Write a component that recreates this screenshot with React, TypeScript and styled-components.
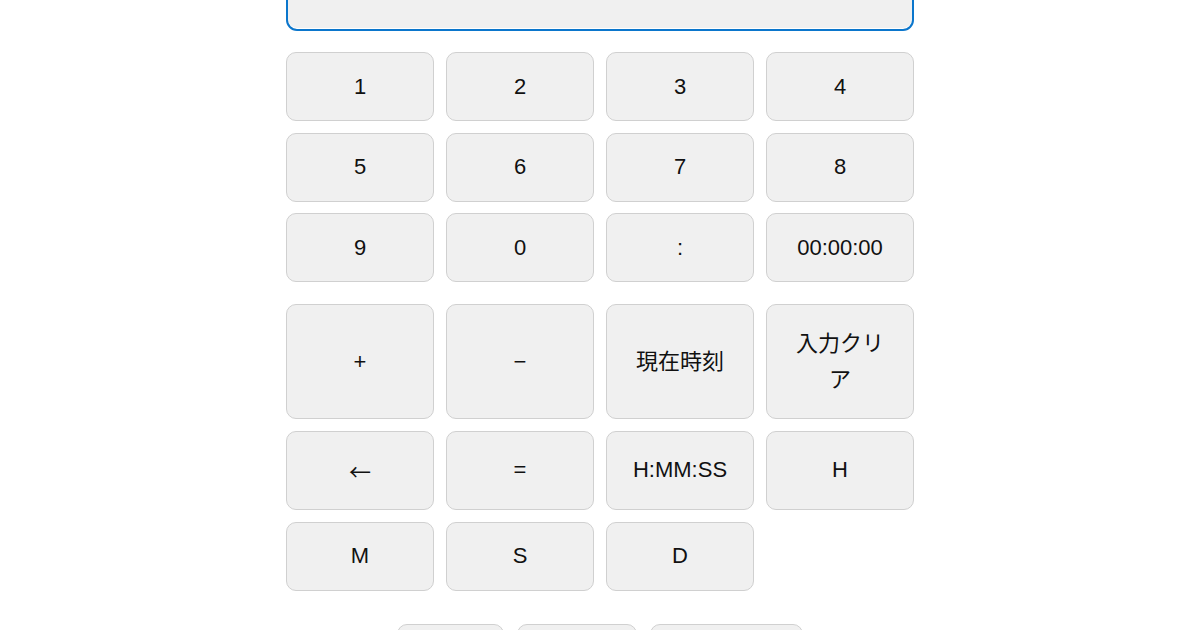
import React from "react";
import styled, { createGlobalStyle } from "styled-components";

const Global = createGlobalStyle`
  html, body { margin: 0; padding: 0; background: #ffffff; }
  body { font-family: "Liberation Sans", Arial, "Noto Sans CJK JP", sans-serif; overflow: hidden; }
`;

const Page = styled.div`
  width: 628px;
  margin: -30px auto 0;
  display: flex;
  flex-direction: column;
`;

const Display = styled.input`
  box-sizing: border-box;
  width: 628px;
  height: 61px;
  border: 2px solid #0b76cc;
  border-radius: 11px;
  background: #f0f0f0;
  box-shadow: inset 0 -1px 0 #ffffff;
  outline: none;
  font: 22px "Liberation Sans", sans-serif;
  padding: 0 16px;
`;

const Grid = styled.div<{ $rows: string; $mt: number }>`
  display: grid;
  grid-template-columns: repeat(4, 148px);
  grid-template-rows: ${(p) => p.$rows};
  column-gap: 12px;
  row-gap: 11.5px;
  margin-top: ${(p) => p.$mt}px;
`;

const Key = styled.button<{ $cjk?: boolean }>`
  box-sizing: border-box;
  border: 1px solid #d0d0d0;
  border-radius: 10px;
  background: #f0f0f0;
  color: #111;
  font-family: ${(p) =>
    p.$cjk
      ? `"Noto Sans CJK JP", sans-serif`
      : `"Liberation Sans", Arial, "Noto Sans CJK JP", sans-serif`};
  font-size: 22px;
  line-height: 36px;
  padding: 0 24px;
  cursor: pointer;
  display: flex;
  align-items: center;
  justify-content: center;
  text-align: center;
`;

const Footer = styled.div`
  display: flex;
  justify-content: center;
  gap: 13px;
  margin-top: 33px;
`;

const FootKey = styled(Key)<{ $w: number }>`
  width: ${(p) => p.$w}px;
  height: 60px;
`;

const keys1 = ["1", "2", "3", "4", "5", "6", "7", "8", "9", "0", ":", "00:00:00"];
const keys2: { label: string; cjk?: boolean }[] = [
  { label: "+" },
  { label: "−" },
  { label: "現在時刻" },
  { label: "入力クリア" },
  { label: "←", cjk: true },
  { label: "=" },
  { label: "H:MM:SS" },
  { label: "H" },
  { label: "M" },
  { label: "S" },
  { label: "D" },
];

export default function App() {
  return (
    <>
      <Global />
      <Page>
        <Display defaultValue="" />
        <Grid $rows="repeat(3, 69px)" $mt={21}>
          {keys1.map((k) => (
            <Key key={k}>{k}</Key>
          ))}
        </Grid>
        <Grid $rows="115px 79.5px 69px" $mt={22}>
          {keys2.map((k) => (
            <Key key={k.label} $cjk={k.cjk}>
              {k.label}
            </Key>
          ))}
        </Grid>
        <Footer>
          <FootKey $w={107}>&nbsp;</FootKey>
          <FootKey $w={120}>&nbsp;</FootKey>
          <FootKey $w={153}>&nbsp;</FootKey>
        </Footer>
      </Page>
    </>
  );
}
